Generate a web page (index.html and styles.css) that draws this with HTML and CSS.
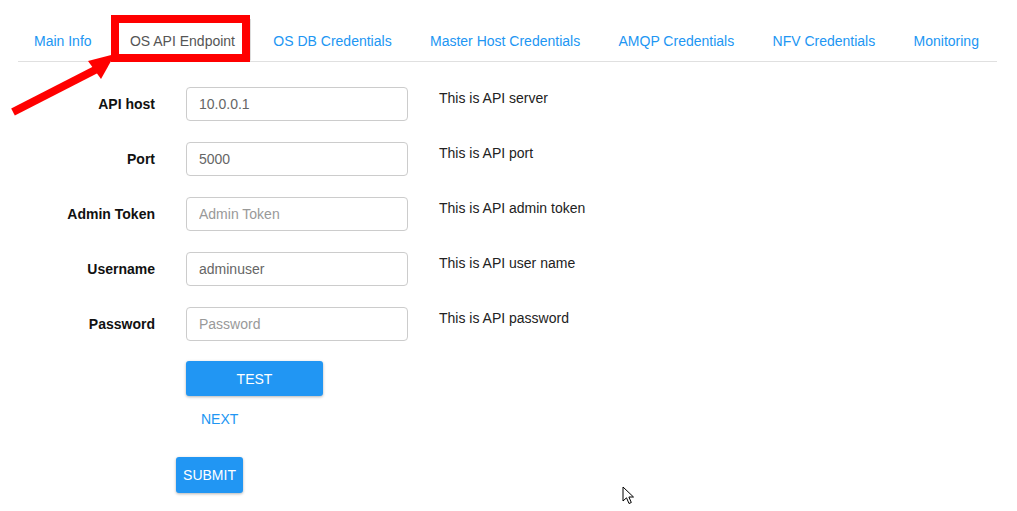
FILE: index.html
```html
<!DOCTYPE html>
<html lang="en">
<head>
<meta charset="utf-8">
<title>OS API Endpoint</title>
<link rel="stylesheet" href="styles.css">
</head>
<body>
<div class="page">
  <nav class="tabs">
    <a class="tab">Main Info</a>
    <a class="tab active">OS API Endpoint</a>
    <a class="tab">OS DB Credentials</a>
    <a class="tab">Master Host Credentials</a>
    <a class="tab">AMQP Credentials</a>
    <a class="tab">NFV Credentials</a>
    <a class="tab">Monitoring</a>
  </nav>

  <form class="form">
    <label class="label">API host</label>
    <input class="field" type="text" value="10.0.0.1">
    <span class="hint">This is API server</span>

    <label class="label">Port</label>
    <input class="field" type="text" value="5000">
    <span class="hint">This is API port</span>

    <label class="label">Admin Token</label>
    <input class="field" type="text" placeholder="Admin Token">
    <span class="hint">This is API admin token</span>

    <label class="label">Username</label>
    <input class="field" type="text" value="adminuser">
    <span class="hint">This is API user name</span>

    <label class="label">Password</label>
    <input class="field" type="password" placeholder="Password">
    <span class="hint">This is API password</span>

    <div class="actions">
      <button type="button" class="btn raised test">TEST</button>
      <button type="button" class="btn flat">NEXT</button>
    </div>
  </form>

  <div class="submit-row">
    <button type="button" class="btn raised submit">SUBMIT</button>
  </div>

  <svg class="annot" width="260" height="120" viewBox="0 0 260 120">
    <rect x="115" y="19" width="131" height="39" fill="none" stroke="#ff0000" stroke-width="8"/>
    <line x1="13" y1="112" x2="97" y2="69" stroke="#ff0000" stroke-width="8"/>
    <polygon points="88,61 101,79 115,54" fill="#ff0000"/>
  </svg>

  <svg class="cursor" width="14" height="20" viewBox="0 0 14 20">
    <path d="M1 1 L1 15 L4.5 11.8 L7 17.5 L9.3 16.5 L6.9 11 L11.5 11 Z" fill="#fff" stroke="#000" stroke-width="1" stroke-linejoin="round"/>
  </svg>
</div>
</body>
</html>
```

FILE: styles.css
```css
* { box-sizing: border-box; }

html, body {
  margin: 0;
  padding: 0;
  background: #fff;
}

body {
  font-family: "Liberation Sans", Arial, sans-serif;
  font-size: 14px;
  color: #222;
}

.page {
  position: relative;
  width: 1017px;
  height: 511px;
  padding-top: 19px;
  overflow: hidden;
}

.tabs {
  display: flex;
  justify-content: space-between;
  margin: 0 20px 0 18px;
  padding-right: 2px;
  height: 43px;
  border-bottom: 1px solid #e0e0e0;
}

.tab {
  display: block;
  height: 42px;
  padding: 2px 16px 0;
  line-height: 40px;
  color: #2196f3;
  white-space: nowrap;
  cursor: pointer;
}

.tab.active {
  color: #555;
  border: 1px solid #ddd;
  border-bottom-color: transparent;
  background: #fff;
  padding-top: 1px;
  padding-left: 15px;
  padding-right: 15px;
}

.form {
  display: grid;
  grid-template-columns: 155px 222px 1fr;
  column-gap: 31px;
  row-gap: 21px;
  margin-top: 25px;
}

.label {
  align-self: center;
  text-align: right;
  font-weight: bold;
  color: #111;
  line-height: 20px;
}

.field {
  height: 34px;
  width: 222px;
  padding: 0 12px;
  border: 1px solid #ccc;
  border-radius: 4px;
  font-family: inherit;
  font-size: 14px;
  color: #666;
  background: #fff;
  outline: none;
}

.field::placeholder {
  color: #999;
}

.hint {
  align-self: start;
  line-height: 20px;
  padding-top: 1px;
  color: #222;
}

.actions {
  grid-column: 2;
  display: flex;
  flex-direction: column;
  align-items: flex-start;
  gap: 5px;
  margin-top: -1px;
}

.btn {
  font-family: inherit;
  font-size: 14px;
  border: none;
  cursor: pointer;
  height: 36px;
}

.btn.raised {
  background: #2196f3;
  color: #fff;
  border-radius: 3px;
  box-shadow: 0 1px 3px rgba(0, 0, 0, 0.3);
}

.btn.test {
  width: 137px;
  height: 35px;
}

.btn.flat {
  background: transparent;
  color: #2196f3;
  padding: 0 15px;
}

.submit-row {
  display: flex;
  padding-left: 176px;
  margin-top: 20px;
}

.btn.submit {
  width: 67px;
  padding: 0;
}

.annot {
  position: absolute;
  left: 0;
  top: 0;
  pointer-events: none;
}

.cursor {
  position: absolute;
  left: 622px;
  top: 486px;
}
```
